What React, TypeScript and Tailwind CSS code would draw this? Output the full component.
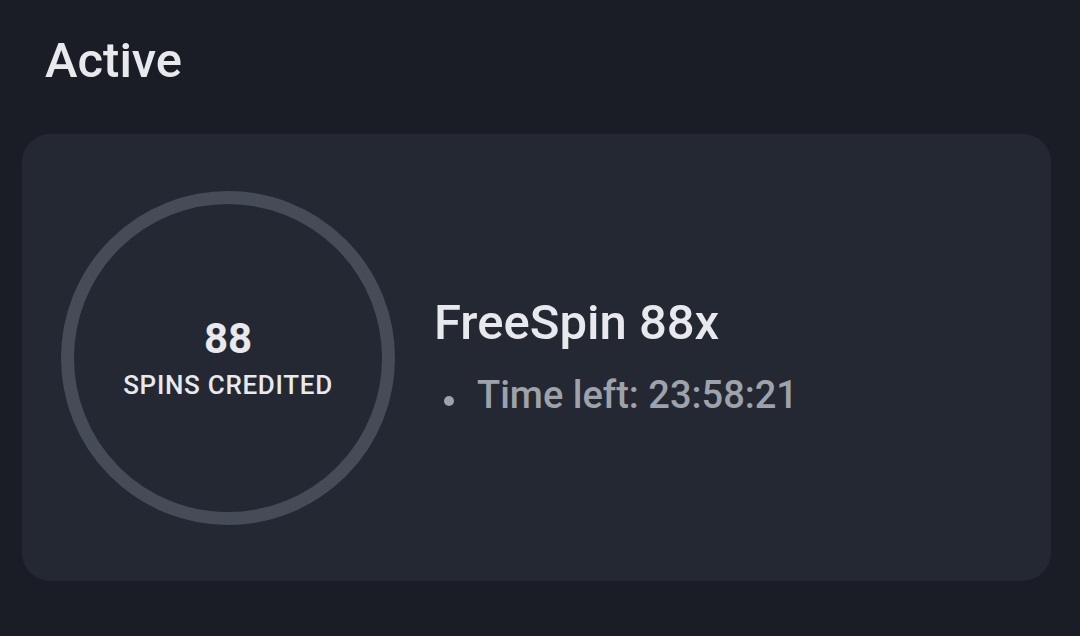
export default function App() {
  return (
    <main className="min-h-screen w-[1080px] h-[636px] bg-[#1a1d25] font-['Roboto',sans-serif] text-[#e8e9ec]">

      {/* HEADER */}

      <h1 className="pl-[45px] pt-[31px] text-[49px] font-medium leading-[60px]">
        Active
      </h1>

      {/* CARD */}

      <section className="ml-[22px] mt-[43px] flex h-[447px] w-[1029px] items-center rounded-[28px] bg-[#232833] pl-[39px]">

        <div className="flex h-[334px] w-[334px] flex-col items-center justify-center rounded-full border-[13px] border-[#454c57]">
          <p className="text-[42px] font-bold leading-[42px]">88</p>
          <p className="mt-[12px] text-[26px] font-medium leading-[26px] tracking-[0.7px]">SPINS CREDITED</p>
        </div>

        <div className="ml-[39px] -mt-[2px]">
          <h2 className="text-[49px] font-medium leading-[56px]">
            FreeSpin 88x
          </h2>
          <ul className="mt-[21px] text-[38px] font-medium leading-[46px] text-[#9ea2aa]">
            <li className="flex items-center">
              <span className="ml-[10px] mr-[23px] mt-[11px] h-[10px] w-[10px] rounded-full bg-[#9ea2aa]" />
              Time left: 23:58:21
            </li>
          </ul>
        </div>

      </section>

    </main>
  );
}
